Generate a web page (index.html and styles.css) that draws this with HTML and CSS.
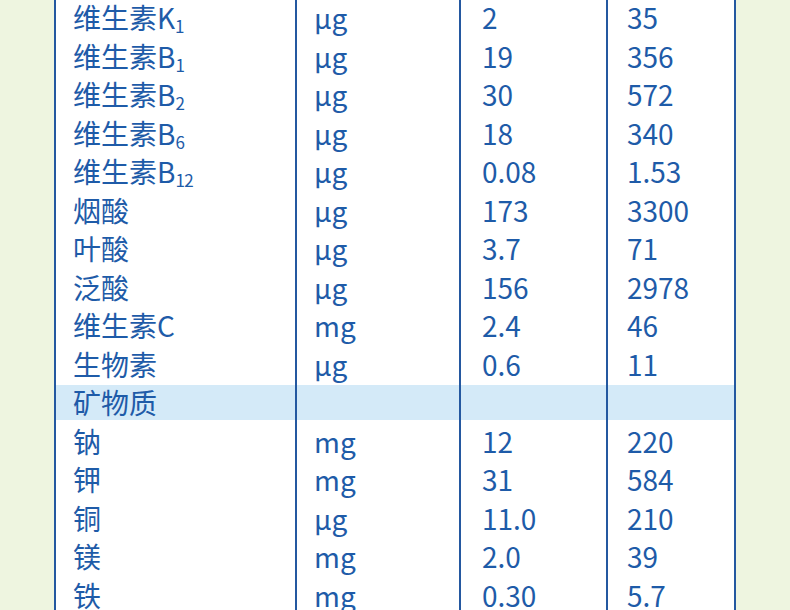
FILE: index.html
```html
<!DOCTYPE html>
<html lang="zh-CN">
<head>
<meta charset="utf-8">
<link rel="stylesheet" href="styles.css">
</head>
<body>
<div class="table">
  <div class="row"><div class="c">维生素K<sub>1</sub></div><div class="c">μg</div><div class="c">2</div><div class="c">35</div></div>
  <div class="row"><div class="c">维生素B<sub>1</sub></div><div class="c">μg</div><div class="c">19</div><div class="c">356</div></div>
  <div class="row"><div class="c">维生素B<sub>2</sub></div><div class="c">μg</div><div class="c">30</div><div class="c">572</div></div>
  <div class="row"><div class="c">维生素B<sub>6</sub></div><div class="c">μg</div><div class="c">18</div><div class="c">340</div></div>
  <div class="row"><div class="c">维生素B<sub>12</sub></div><div class="c">μg</div><div class="c">0.08</div><div class="c">1.53</div></div>
  <div class="row"><div class="c">烟酸</div><div class="c">μg</div><div class="c">173</div><div class="c">3300</div></div>
  <div class="row"><div class="c">叶酸</div><div class="c">μg</div><div class="c">3.7</div><div class="c">71</div></div>
  <div class="row"><div class="c">泛酸</div><div class="c">μg</div><div class="c">156</div><div class="c">2978</div></div>
  <div class="row"><div class="c">维生素C</div><div class="c">mg</div><div class="c">2.4</div><div class="c">46</div></div>
  <div class="row"><div class="c">生物素</div><div class="c">μg</div><div class="c">0.6</div><div class="c">11</div></div>
  <div class="row section"><div class="c">矿物质</div><div class="c"></div><div class="c"></div><div class="c"></div></div>
  <div class="row"><div class="c">钠</div><div class="c">mg</div><div class="c">12</div><div class="c">220</div></div>
  <div class="row"><div class="c">钾</div><div class="c">mg</div><div class="c">31</div><div class="c">584</div></div>
  <div class="row"><div class="c">铜</div><div class="c">μg</div><div class="c">11.0</div><div class="c">210</div></div>
  <div class="row"><div class="c">镁</div><div class="c">mg</div><div class="c">2.0</div><div class="c">39</div></div>
  <div class="row"><div class="c">铁</div><div class="c">mg</div><div class="c">0.30</div><div class="c">5.7</div></div>
</div>
</body>
</html>
```
FILE: styles.css
```css
html, body {
  margin: 0;
  padding: 0;
  background: #eef5e0;
  height: 610px;
  overflow: hidden;
}
.table {
  margin-top: -2px;
  margin-left: 54px;
  width: 682px;
  box-sizing: border-box;
  background: #ffffff;
  border-left: 2px solid #2458a0;
  border-right: 2px solid #2458a0;
  font-family: "Noto Sans CJK SC", "Noto Sans", sans-serif;
  font-size: 28px;
  color: #1e5ba8;
}
.row {
  display: grid;
  grid-template-columns: 241px 164px 147px 126px;
  height: 38.5px;
}
.c {
  box-sizing: border-box;
  padding-left: 17px;
  line-height: 38.5px;
  white-space: nowrap;
  border-right: 2px solid #2458a0;
}
.c:nth-child(3) {
  padding-left: 21px;
}
.c:last-child {
  padding-left: 19px;
  border-right: none;
}
.c sub {
  font-size: 17px;
  line-height: 0;
  vertical-align: -4px;
  letter-spacing: -0.5px;
}
.section .c {
  background: linear-gradient(#ffffff 0 2px, #d4eaf8 2px calc(100% - 2px), #ffffff calc(100% - 2px));
}
```
